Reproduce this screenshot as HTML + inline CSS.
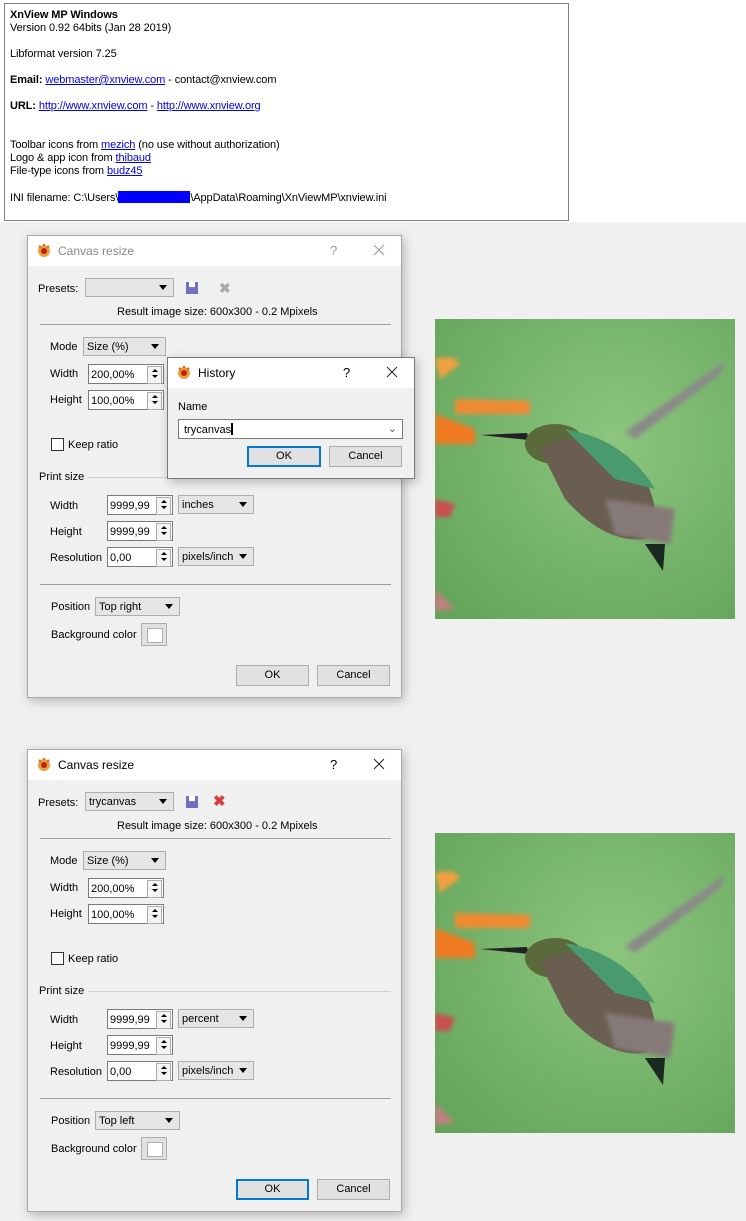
<!DOCTYPE html>
<html><head><meta charset="utf-8"><style>
*{box-sizing:border-box;margin:0;padding:0}
body{width:746px;height:1221px;background:#f0f0f0;position:relative;overflow:hidden;font-family:"Liberation Sans",Tahoma,sans-serif;font-size:11px;color:#000}
.a{position:absolute;white-space:nowrap}
#top{position:absolute;left:0;top:0;width:746px;height:222px;background:#fff}
#box{position:absolute;left:4px;top:3px;width:565px;height:218px;border:1px solid #828282;background:#fff}
#box div{position:absolute;left:5px;white-space:nowrap;font-size:11px;line-height:13px;letter-spacing:-0.1px}
a{color:#0000ee;text-decoration:underline}
.dlg{position:absolute;left:27px;width:375px;height:463px;background:#f0f0f0;border:1px solid #a8a8a8;box-shadow:2px 3px 10px rgba(0,0,0,.25)}
.tb{position:absolute;left:0;top:0;right:0;height:30px;background:#fff}
.ttl{position:absolute;left:30px;top:8px;font-size:12px}
.q{position:absolute;left:302px;top:7px;font-size:13px}
.x{position:absolute;left:345px;top:8px;width:12px;height:12px}
.ico{position:absolute;width:16px;height:14px}
.combo{position:absolute;height:19px;background:#e5e5e5;border:1px solid #adadad;padding:3px 3px 0;font-size:11px;line-height:13px}
.combo:after{content:"";position:absolute;right:6px;top:6px;border-left:4px solid transparent;border-right:4px solid transparent;border-top:5px solid #000}
.spin{position:absolute;height:20px;background:#fff;border:1px solid #7a7a7a;padding:4px 2px 0;font-size:11px;line-height:13px}
.spin:after{content:"";position:absolute;right:1px;top:1px;width:13px;height:16px;border:1px solid #adadad;background:linear-gradient(#e8e8e8,#e8e8e8) 0 7px/100% 1px no-repeat #f4f4f4}
.spin i{position:absolute;right:5px;width:0;height:0;border-left:3px solid transparent;border-right:3px solid transparent;z-index:2}
.spin i.u{top:4px;border-bottom:3px solid #000}
.spin i.d{top:10px;border-top:3px solid #000}
.hr{position:absolute;left:12px;width:351px;height:1px;background:#a0a0a0}
.btn{position:absolute;height:21px;background:#e1e1e1;border:1px solid #adadad;text-align:center;line-height:19px;font-size:11px}
.chk{position:absolute;width:13px;height:13px;background:#fff;border:1px solid #333}
.sw{position:absolute;width:26px;height:23px;border:1px solid #adadad;background:#e1e1e1}
.sw:after{content:"";position:absolute;left:5px;top:4px;width:14px;height:13px;background:#fff;border:1px solid #adadad}
.img{position:absolute;left:435px;width:300px;height:300px}
</style></head><body>
<div id="top"></div>
<div id="box">
<div style="top:5px;font-weight:bold">XnView MP Windows</div>
<div style="top:18px">Version 0.92 64bits (Jan 28 2019)</div>
<div style="top:44px">Libformat version 7.25</div>
<div style="top:70px"><b>Email:</b> <a>webmaster@xnview.com</a> - contact@xnview.com</div>
<div style="top:96px"><b>URL:</b> <a>http://www.xnview.com</a> - <a>http://www.xnview.org</a></div>
<div style="top:135px">Toolbar icons from <a>mezich</a> (no use without authorization)</div>
<div style="top:148px">Logo &amp; app icon from <a>thibaud</a></div>
<div style="top:161px">File-type icons from <a>budz45</a></div>
<div style="top:187px">INI filename: C:\Users\<span style="display:inline-block;width:72px;height:12px;background:#0000ff;vertical-align:-2px"></span>\AppData\Roaming\XnViewMP\xnview.ini</div>
</div>

<!-- Dialog 1 -->
<div class="dlg" style="top:235px">
<div class="tb"></div>
<svg class="ico" style="left:8px;top:7px" viewBox="0 0 16 14"><circle cx="8" cy="8" r="6" fill="#e8a040"/><circle cx="8" cy="8" r="3" fill="#c02010"/><path d="M3 3l2 2M13 3l-2 2M8 1v2" stroke="#d07020" stroke-width="2"/></svg>
<div class="ttl" style="color:#888">Canvas resize</div>
<div class="q" style="color:#999">?</div><svg class="x" viewBox="0 0 12 12"><path d="M1 1L11 11M11 1L1 11" stroke="#999" stroke-width="1"/></svg>
<div class="a" style="left:10px;top:47px">Presets:</div>
<div class="combo" style="left:57px;top:42px;width:89px"></div>
<svg class="ico" style="left:156px;top:45px" viewBox="0 0 16 14"><rect x="2" y="1" width="12" height="12" fill="#7070c0"/><rect x="5" y="1" width="6" height="5" fill="#fff"/></svg>
<div class="a" style="left:191px;top:44px;color:#aaa;font-size:14px;font-weight:bold">✖</div>
<div class="a" style="left:89px;top:70px">Result image size: 600x300 - 0.2 Mpixels</div>
<div class="hr" style="top:88px"></div>
<div class="a" style="left:22px;top:105px">Mode</div>
<div class="combo" style="left:55px;top:101px;width:83px">Size (%)</div>
<div class="a" style="left:22px;top:132px">Width</div>
<div class="spin" style="left:60px;top:128px;width:76px">200,00%<i class="u"></i><i class="d"></i></div>
<div class="a" style="left:22px;top:158px">Height</div>
<div class="spin" style="left:60px;top:154px;width:76px">100,00%<i class="u"></i><i class="d"></i></div>
<div class="chk" style="left:23px;top:202px"></div>
<div class="a" style="left:40px;top:203px">Keep ratio</div>
<div class="a" style="left:11px;top:235px">Print size</div>
<div class="a" style="left:60px;top:241px;width:303px;height:1px;background:#d0d0d0"></div>
<div class="a" style="left:22px;top:264px">Width</div>
<div class="spin" style="left:79px;top:259px;width:66px">9999,99<i class="u"></i><i class="d"></i></div>
<div class="combo" style="left:150px;top:259px;width:76px">inches</div>
<div class="a" style="left:22px;top:290px">Height</div>
<div class="spin" style="left:79px;top:285px;width:66px">9999,99<i class="u"></i><i class="d"></i></div>
<div class="a" style="left:22px;top:316px">Resolution</div>
<div class="spin" style="left:79px;top:311px;width:66px">0,00<i class="u"></i><i class="d"></i></div>
<div class="combo" style="left:150px;top:311px;width:76px">pixels/inch</div>
<div class="hr" style="top:348px"></div>
<div class="a" style="left:23px;top:365px">Position</div>
<div class="combo" style="left:67px;top:361px;width:85px">Top right</div>
<div class="a" style="left:23px;top:393px">Background color</div>
<div class="sw" style="left:113px;top:387px"></div>
<div class="btn" style="left:208px;top:429px;width:73px">OK</div>
<div class="btn" style="left:289px;top:429px;width:73px">Cancel</div>
</div>

<!-- History -->
<div class="dlg" style="left:167px;top:357px;width:248px;height:122px;border-color:#777">
<div class="tb"></div>
<svg class="ico" style="left:8px;top:7px" viewBox="0 0 16 14"><circle cx="8" cy="8" r="6" fill="#e8a040"/><circle cx="8" cy="8" r="3" fill="#c02010"/><path d="M3 3l2 2M13 3l-2 2M8 1v2" stroke="#d07020" stroke-width="2"/></svg>
<div class="ttl">History</div>
<div class="q" style="left:175px">?</div><svg class="x" style="left:218px" viewBox="0 0 12 12"><path d="M1 1L11 11M11 1L1 11" stroke="#222" stroke-width="1"/></svg>
<div class="a" style="left:10px;top:43px">Name</div>
<div class="a" style="left:10px;top:61px;width:225px;height:20px;background:#fff;border:1px solid #7a7a7a;padding:3px 5px">trycanvas<span style="display:inline-block;width:2px;height:12px;background:#000;vertical-align:-2px"></span><span style="position:absolute;right:5px;top:2px;color:#555">⌄</span></div>
<div class="btn" style="left:79px;top:88px;width:74px;border:2px solid #0078d7;line-height:17px">OK</div>
<div class="btn" style="left:161px;top:88px;width:73px">Cancel</div>
</div>

<!-- Dialog 2 -->
<div class="dlg" style="top:749px">
<div class="tb"></div>
<svg class="ico" style="left:8px;top:7px" viewBox="0 0 16 14"><circle cx="8" cy="8" r="6" fill="#e8a040"/><circle cx="8" cy="8" r="3" fill="#c02010"/><path d="M3 3l2 2M13 3l-2 2M8 1v2" stroke="#d07020" stroke-width="2"/></svg>
<div class="ttl">Canvas resize</div>
<div class="q">?</div><svg class="x" viewBox="0 0 12 12"><path d="M1 1L11 11M11 1L1 11" stroke="#222" stroke-width="1"/></svg>
<div class="a" style="left:10px;top:47px">Presets:</div>
<div class="combo" style="left:57px;top:42px;width:89px">trycanvas</div>
<svg class="ico" style="left:156px;top:45px" viewBox="0 0 16 14"><rect x="2" y="1" width="12" height="12" fill="#7070c0"/><rect x="5" y="1" width="6" height="5" fill="#fff"/></svg>
<div class="a" style="left:185px;top:42px;color:#d84040;font-size:15px;font-weight:bold">✖</div>
<div class="a" style="left:89px;top:70px">Result image size: 600x300 - 0.2 Mpixels</div>
<div class="hr" style="top:88px"></div>
<div class="a" style="left:22px;top:105px">Mode</div>
<div class="combo" style="left:55px;top:101px;width:83px">Size (%)</div>
<div class="a" style="left:22px;top:132px">Width</div>
<div class="spin" style="left:60px;top:128px;width:76px">200,00%<i class="u"></i><i class="d"></i></div>
<div class="a" style="left:22px;top:158px">Height</div>
<div class="spin" style="left:60px;top:154px;width:76px">100,00%<i class="u"></i><i class="d"></i></div>
<div class="chk" style="left:23px;top:202px"></div>
<div class="a" style="left:40px;top:203px">Keep ratio</div>
<div class="a" style="left:11px;top:235px">Print size</div>
<div class="a" style="left:60px;top:241px;width:303px;height:1px;background:#d0d0d0"></div>
<div class="a" style="left:22px;top:264px">Width</div>
<div class="spin" style="left:79px;top:259px;width:66px">9999,99<i class="u"></i><i class="d"></i></div>
<div class="combo" style="left:150px;top:259px;width:76px">percent</div>
<div class="a" style="left:22px;top:290px">Height</div>
<div class="spin" style="left:79px;top:285px;width:66px">9999,99<i class="u"></i><i class="d"></i></div>
<div class="a" style="left:22px;top:316px">Resolution</div>
<div class="spin" style="left:79px;top:311px;width:66px">0,00<i class="u"></i><i class="d"></i></div>
<div class="combo" style="left:150px;top:311px;width:76px">pixels/inch</div>
<div class="hr" style="top:348px"></div>
<div class="a" style="left:23px;top:365px">Position</div>
<div class="combo" style="left:67px;top:361px;width:85px">Top left</div>
<div class="a" style="left:23px;top:393px">Background color</div>
<div class="sw" style="left:113px;top:387px"></div>
<div class="btn" style="left:208px;top:429px;width:73px;border:2px solid #0078d7;line-height:17px">OK</div>
<div class="btn" style="left:289px;top:429px;width:73px">Cancel</div>
</div>

<svg class="img" style="top:319px" viewBox="0 0 300 300"><use href="#bird"/></svg>
<svg class="img" style="top:833px" viewBox="0 0 300 300">
<defs>
<radialGradient id="bg" cx="0.6" cy="0.4" r="0.8"><stop offset="0" stop-color="#8cc57e"/><stop offset="1" stop-color="#63a45a"/></radialGradient>
<filter id="bl"><feGaussianBlur stdDeviation="2"/></filter>
<g id="bird">
<rect width="300" height="300" fill="url(#bg)"/>
<g filter="url(#bl)">
<path d="M0 40 Q20 35 25 45 L5 60Z" fill="#f0a040"/>
<path d="M20 80 L95 82 L95 95 L20 95Z" fill="#f08a30"/>
<path d="M0 95 L40 110 L40 125 L0 125Z" fill="#f07a20"/>
<path d="M0 180 L20 185 L15 198 L0 198Z" fill="#c85050"/>
<path d="M0 270 L20 290 L0 292Z" fill="#c08080"/>
<path d="M190 113 L290 42 L285 55 L200 120Z" fill="#8a8a88"/>
</g>
<path d="M45 116 L92 114 L94 121Z" fill="#222"/>
<ellipse cx="120" cy="125" rx="30" ry="20" fill="#5a6a3a"/>
<path d="M105 130 Q140 100 210 160 Q230 200 210 220 Q170 225 130 180Z" fill="#6a5e50"/>
<path d="M130 110 Q190 120 220 170 L180 160Z" fill="#4a9a70"/>
<path d="M170 180 L240 190 L235 225 L180 215Z" fill="#857a78" filter="url(#bl)"/>
<path d="M210 225 L230 225 L228 252Z" fill="#1a2a20"/>
</g></defs><use href="#bird"/></svg>
</body></html>
